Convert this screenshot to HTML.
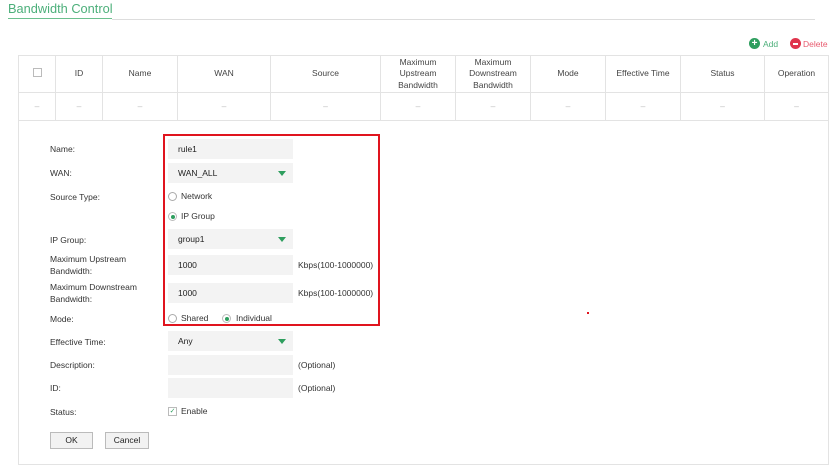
<!DOCTYPE html>
<html><head><meta charset="utf-8"><style>
body{margin:0;width:831px;height:471px;background:#fff;font-family:"Liberation Sans",sans-serif;font-size:8.5px;color:#333;position:relative;overflow:hidden}
.a{position:absolute}
.title{left:8px;top:1px;font-size:12.8px;color:#4caf7a}
.tl{left:8px;top:18px;width:104px;height:1px;background:#6cc08e}
.gl{left:112px;top:19px;width:703px;height:1px;background:#ddd}
table{position:absolute;left:18px;top:55px;border-collapse:collapse;width:811px}
td{border:1px solid #e3e3e3;text-align:center;color:#444;font-size:8.5px;line-height:11.5px;padding:0}
tr.h td{height:36px}
tr.r td{height:27px;color:#bbb}
.panel{left:18px;top:120px;width:809px;height:344px;border:1px solid #e3e3e3;border-top:none}
.lbl{left:50px;color:#333;line-height:12px}
.inp{left:168px;width:125px;height:20px;background:#f3f3f3;box-sizing:border-box;padding-left:10px;line-height:20px;color:#222}
.arr{position:absolute;right:7px;top:8px;width:0;height:0;border-left:4px solid transparent;border-right:4px solid transparent;border-top:5px solid #2e9e5e}
.rad{width:7px;height:7px;border:1px solid #aaa;border-radius:50%;background:#fff}
.rad.on{border-color:#bbb}
.rad.on::after{content:"";position:absolute;left:1.5px;top:1.5px;width:4px;height:4px;border-radius:50%;background:#2e9e5e}
.btn{height:17px;border:1px solid #bbb;background:#f2f2f2;box-sizing:border-box;text-align:center;line-height:15px;color:#222}
</style></head><body>
<div class="a title">Bandwidth Control</div>
<div class="a tl"></div><div class="a gl"></div>
<div class="a" style="left:749px;top:38px;width:11px;height:11px;border-radius:50%;background:#2e9e5e;color:#fff;font-size:10px;line-height:11px;text-align:center;font-weight:bold">+</div>
<div class="a" style="left:763px;top:38px;color:#4caf7a;line-height:12px">Add</div>
<div class="a" style="left:790px;top:38px;width:11px;height:11px;border-radius:50%;background:#e0344c"><div class="a" style="left:3px;top:5px;width:5px;height:1.5px;background:#fff"></div></div>
<div class="a" style="left:803px;top:38px;color:#e85a6e;line-height:12px">Delete</div>
<table>
<tr class="h"><td style="width:36px"><span style="display:inline-block;width:7px;height:7px;border:1px solid #bbb"></span></td><td style="width:46px">ID</td><td style="width:74px">Name</td><td style="width:92px">WAN</td><td style="width:109px">Source</td><td style="width:74px">Maximum<br>Upstream<br>Bandwidth</td><td style="width:74px">Maximum<br>Downstream<br>Bandwidth</td><td style="width:74px">Mode</td><td style="width:74px">Effective Time</td><td style="width:83px">Status</td><td>Operation</td></tr>
<tr class="r"><td>–</td><td>–</td><td>–</td><td>–</td><td>–</td><td>–</td><td>–</td><td>–</td><td>–</td><td>–</td><td>–</td></tr>
</table>
<div class="a panel"></div>
<div class="a lbl" style="top:143px">Name:</div>
<div class="a inp" style="top:139px">rule1</div>
<div class="a lbl" style="top:167px">WAN:</div>
<div class="a inp" style="top:163px">WAN_ALL<div class="arr"></div></div>
<div class="a lbl" style="top:191px">Source Type:</div>
<div class="a rad" style="left:168px;top:192px"></div><div class="a" style="left:181px;top:190px;line-height:12px">Network</div>
<div class="a rad on" style="left:168px;top:212px"></div><div class="a" style="left:181px;top:210px;line-height:12px">IP Group</div>
<div class="a lbl" style="top:234px">IP Group:</div>
<div class="a inp" style="top:229px">group1<div class="arr"></div></div>
<div class="a lbl" style="top:253px">Maximum Upstream<br>Bandwidth:</div>
<div class="a inp" style="top:255px">1000</div>
<div class="a" style="left:298px;top:259px;line-height:12px">Kbps(100-1000000)</div>
<div class="a lbl" style="top:281px">Maximum Downstream<br>Bandwidth:</div>
<div class="a inp" style="top:283px">1000</div>
<div class="a" style="left:298px;top:287px;line-height:12px">Kbps(100-1000000)</div>
<div class="a lbl" style="top:313px">Mode:</div>
<div class="a rad" style="left:168px;top:314px"></div><div class="a" style="left:181px;top:312px;line-height:12px">Shared</div>
<div class="a rad on" style="left:222px;top:314px"></div><div class="a" style="left:236px;top:312px;line-height:12px">Individual</div>
<div class="a" style="left:163px;top:134px;width:213px;height:188px;border:2px solid #e0141e"></div>
<div class="a lbl" style="top:336px">Effective Time:</div>
<div class="a inp" style="top:331px">Any<div class="arr"></div></div>
<div class="a lbl" style="top:359px">Description:</div>
<div class="a inp" style="top:355px"></div>
<div class="a" style="left:298px;top:359px;line-height:12px">(Optional)</div>
<div class="a lbl" style="top:382px">ID:</div>
<div class="a inp" style="top:378px"></div>
<div class="a" style="left:298px;top:382px;line-height:12px">(Optional)</div>
<div class="a lbl" style="top:406px">Status:</div>
<div class="a" style="left:168px;top:407px;width:7px;height:7px;border:1px solid #bbb;color:#2e9e5e;font-size:7px;line-height:7px;text-align:center">✓</div>
<div class="a" style="left:181px;top:405px;line-height:12px">Enable</div>
<div class="a btn" style="left:50px;top:432px;width:43px">OK</div>
<div class="a btn" style="left:105px;top:432px;width:44px">Cancel</div>
<div class="a" style="left:587px;top:312px;width:2px;height:2px;background:#e0141e"></div>
</body></html>
